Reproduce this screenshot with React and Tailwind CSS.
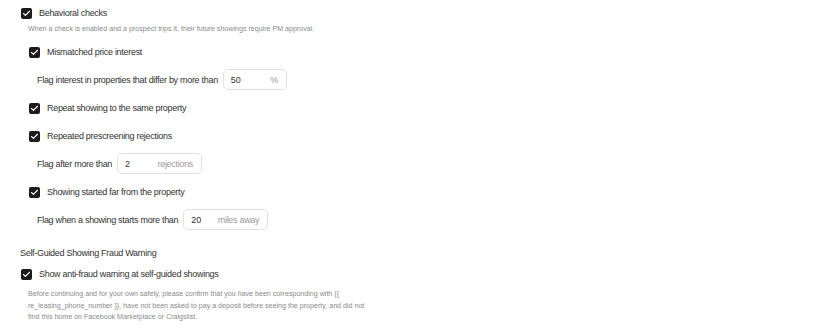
import { Check } from 'lucide-react';

function Box() {
  return (
    <span className="flex h-[11px] w-[11px] shrink-0 items-center justify-center rounded-[2px] bg-[#1c1c1c]">
      <Check className="h-[9px] w-[9px] text-white" strokeWidth={3} />
    </span>
  );
}

function CheckRow({ label, className = '' }) {
  return (
    <div className={`flex h-[12px] items-center gap-[7px] ${className}`}>
      <Box />
      <span className="text-[9px] leading-[12px] tracking-[-0.3px] text-[#333333]">{label}</span>
    </div>
  );
}

function NumberField({ label, value, unit, width, className = '' }) {
  return (
    <div className={`flex h-[21px] items-center gap-[4px] pl-[37px] ${className}`}>
      <span className="text-[9px] leading-[12px] tracking-[-0.3px] text-[#333333]">{label}</span>
      <div
        className={`ml-[1px] flex h-[21px] items-center justify-between rounded-[5px] border border-[#e2e2e2] bg-white pl-[7px] pr-[8px] ${width}`}
      >
        <span className="text-[9px] leading-[12px] text-[#333333]">{value}</span>
        <span className="text-[9px] leading-[12px] tracking-[-0.3px] text-[#9a9a9a]">{unit}</span>
      </div>
    </div>
  );
}

export default function App() {
  return (
    <div className="h-[331px] w-[828px] overflow-hidden bg-white font-['Liberation_Sans',sans-serif]">
      <div className="flex flex-col pt-[7px]">
        <CheckRow label="Behavioral checks" className="pl-[21px]" />
        <p className="mt-[5px] pl-[28px] text-[7.1px] leading-[10px] text-[#8a8a8a]">
          When a check is enabled and a prospect trips it, their future showings require PM approval.
        </p>

        <CheckRow label="Mismatched price interest" className="mt-[12px] pl-[29px]" />
        <NumberField
          label="Flag interest in properties that differ by more than"
          value="50"
          unit="%"
          width="w-[64px]"
          className="mt-[11px]"
        />
        <CheckRow label="Repeat showing to the same property" className="mt-[12px] pl-[29px]" />
        <CheckRow label="Repeated prescreening rejections" className="mt-[16px] pl-[29px]" />
        <NumberField label="Flag after more than" value="2" unit="rejections" width="w-[85px]" className="mt-[11px]" />
        <CheckRow label="Showing started far from the property" className="mt-[12px] pl-[29px]" />
        <NumberField
          label="Flag when a showing starts more than"
          value="20"
          unit="miles away"
          width="w-[85px]"
          className="mt-[11px]"
        />

        <h3 className="mt-[17px] pl-[20px] text-[9px] font-medium leading-[12px] tracking-[-0.3px] text-[#333333]">
          Self-Guided Showing Fraud Warning
        </h3>
        <CheckRow label="Show anti-fraud warning at self-guided showings" className="mt-[9px] pl-[21px]" />
        <p className="mt-[9px] whitespace-nowrap pl-[28px] text-[7.1px] leading-[11.5px] text-[#8a8a8a]">
          Before continuing and for your own safety, please confirm that you have been corresponding with {'{{'}
          <br />
          re_leasing_phone_number {'}}'}, have not been asked to pay a deposit before seeing the property, and did not
          <br />
          find this home on Facebook Marketplace or Craigslist.
        </p>
      </div>
    </div>
  );
}
